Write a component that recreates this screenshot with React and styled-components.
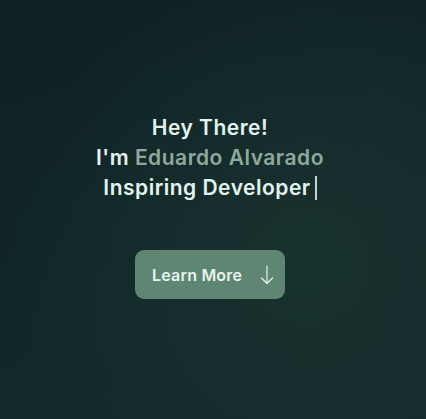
import React from "react";
import styled, { createGlobalStyle } from "styled-components";

const Global = createGlobalStyle`
  html, body { margin: 0; padding: 0; }
  body { font-family: "Inter", "Noto Sans", sans-serif; }
`;

const Hero = styled.section`
  width: 426px;
  height: 419px;
  box-sizing: border-box;
  padding-right: 6px;
  display: flex;
  flex-direction: column;
  align-items: center;
  background:
    radial-gradient(ellipse 70% 70% at 72% 62%, #18322f 0%, rgba(22, 46, 44, 0) 100%),
    linear-gradient(160deg, #0f2025 0%, #122729 60%, #132b2b 100%);
`;

const Heading = styled.h1`
  margin: 113px 0 0;
  font-size: 21px;
  line-height: 30px;
  font-weight: 600;
  letter-spacing: 0.5px;
  color: #e3f4ee;
  text-align: center;
`;

const Line = styled.span`
  display: block;
`;

const Name = styled.span`
  color: #8ea99c;
`;

const Cursor = styled.span`
  display: inline-block;
  width: 2px;
  height: 24px;
  margin-left: 4px;
  vertical-align: -5px;
  background: #c9d2d1;
`;

const Button = styled.button`
  margin-top: 47px;
  width: 150px;
  height: 49px;
  border: none;
  border-radius: 9px;
  background: #5e8673;
  color: #e6f5ef;
  font-family: inherit;
  font-size: 16px;
  font-weight: 600;
  letter-spacing: 0.2px;
  display: flex;
  align-items: center;
  justify-content: flex-start;
  padding: 0 0 0 17px;
  gap: 18px;
  cursor: pointer;
`;

const Arrow = () => (
  <svg width="14" height="20" viewBox="0 0 14 20" fill="none" stroke="#e6f5ef" strokeWidth="1.2" strokeLinecap="round" strokeLinejoin="round">
    <path d="M7 1 V18.5" />
    <path d="M1.5 13 L7 18.5 L12.5 13" />
  </svg>
);

export default function App() {
  return (
    <>
      <Global />
      <Hero>
        <Heading>
          <Line>Hey There!</Line>
          <Line>
            I'm <Name>Eduardo Alvarado</Name>
          </Line>
          <Line>
            Inspiring Developer
            <Cursor />
          </Line>
        </Heading>
        <Button>
          Learn More
          <Arrow />
        </Button>
      </Hero>
    </>
  );
}
